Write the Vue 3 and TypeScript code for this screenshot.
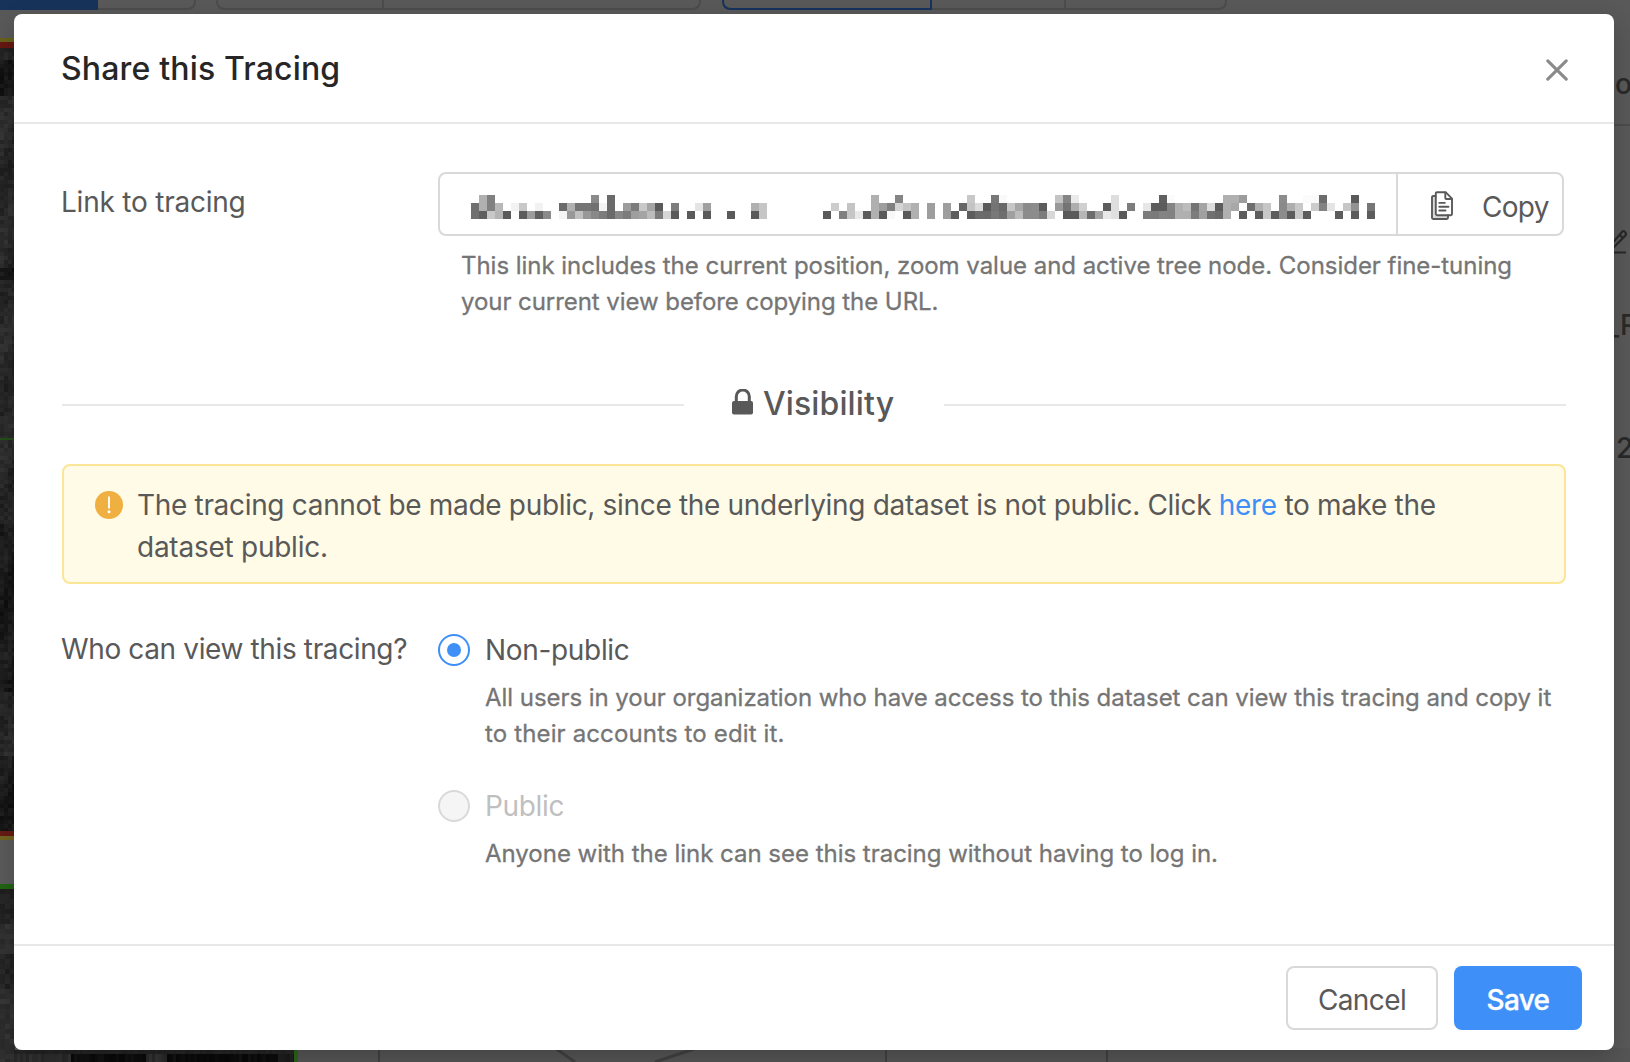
<script setup lang="ts">
import { ref } from 'vue'

interface Cell { x: number; y: number; w: number; h: number; fill: string }

const visibility = ref<'private' | 'public'>('private')

// Redacted link: column index and grey level for every tile, one string per row.
const rows: string[] = [
  '1b0 280 158a 176a 50b0 5385 62c8 6578 66f9 73c4 7484 75ea 80de 8660 87fb 94b0 95b0 969c 1018c 104fb 105fa 1066c 1105a',
  '070 1b0 280 3b8 5f2 6c8 8f2 116a 12b0 1375 1475 1570 16f4 176a 199c 207c 21c8 22a4 235a 257c 28e4 29a0 35b0 36c6 45cc 47c4 50b0 519e 5280 53d4 54c4 55b0 579e 599e 6166 62c4 63dc 645a 6574 6668 67c6 68a6 698a 708c 715c 7398 7474 75ae 76d0 795c 80de 827c 84e6 855c 865c 8784 88b0 89bc 9074 91a4 92dc 935c 94b0 95a8 976e 98b0 99c6 1018a 102ae 103c8 105cc 10682 107e4 109c6 11092 11276',
  '070 160 2c8 3b4 45a 65c 79c 860 98a 11f4 1298 13c0 1498 1588 167c 176a 1888 197c 209e 21a4 22bc 237c 24d6 255a 275a 295a 325a 355a 36c6 445a 4680 47c6 48e8 495a 50b0 515a 52f8 545a 55b0 579e 599e 605c 625c 636c 646a 6578 666e 67a0 68bc 698c 708c 717c 72d8 745a 755a 76b6 776c 78a4 79e8 80e0 815a 847c 857a 8684 8782 88b0 89b0 907c 91a0 9270 936a 94b0 965c 97fb 985c 99c8 1005c 1018c 1025c 103c8 1045c 1085c 1105c 1125c',
]
const tiles: Cell[] = rows.flatMap((row, r) =>
  row.split(' ').map((t) => {
    const g = t.slice(-2)
    return { x: Number(t.slice(0, -2)) * 8, y: r * 8, w: 8, h: 8, fill: `#${g}${g}${g}` }
  }),
)

// Grainy microscopy data at the edges of the viewports.
let seed = 77
const rand = (): number => (seed = (seed * 16807) % 2147483647) / 2147483647
const grey = (v: number): string => {
  const n = Math.round(Math.max(8, Math.min(66, v)))
  return `rgb(${n},${n},${n})`
}
const grain: Cell[] = []
for (let y = 48; y < 831; y += 4) {
  const dark = (y > 58 && y < 96) || (y > 265 && y < 280) || (y > 520 && y < 690) || y > 755 ? -14 : 0
  for (let x = 0; x < 14; x += 4) {
    grain.push({ x, y, w: 4, h: 4, fill: grey(41 + dark + Math.sin(y / 17 + x / 6) * 6 + (rand() - 0.5) * 16) })
  }
}
for (let y = 889; y < 1062; y += 5) {
  const dark = y < 920 || (y > 950 && y < 985) ? -12 : 0
  for (let x = 0; x < 14; x += 5) grain.push({ x, y, w: 5, h: 5, fill: grey(48 + dark + (rand() - 0.5) * 14) })
}
for (let x = 14; x < 294; x += 3) {
  const black = (x > 68 && x < 145) || (x > 165 && x < 277)
  grain.push({ x, y: 1050, w: 3, h: 5, fill: grey(36 + (rand() - 0.5) * 6) })
  grain.push({ x, y: 1054, w: 3, h: 8, fill: grey((black ? 12 : x > 200 ? 30 : 46) + (rand() - 0.5) * 14) })
}
</script>

<template>
  <div class="page">
    <svg class="backdrop" width="1630" height="1062" viewBox="0 0 1630 1062" aria-hidden="true">
      <rect width="1630" height="1062" fill="#595959" />
      <rect width="98" height="10" fill="#18335a" />
      <g fill="none" stroke="#4c4c4c" stroke-width="2">
        <path d="M98 9H187Q195 9 195 1V0M217 0V1Q217 9 225 9H692Q700 9 700 1V0M383 0V8" />
        <path d="M931 9H1218Q1226 9 1226 1V0M1065 0V8" />
        <path d="M1614 125H1630" />
      </g>
      <path d="M723 0V1Q723 9 731 9H931V0" fill="none" stroke="#17335c" stroke-width="2" />
      <rect v-for="(c, i) in grain" :key="i" :x="c.x" :y="c.y" :width="c.w" :height="c.h" :fill="c.fill" />
      <rect y="38" width="14" height="4" fill="#67621c" />
      <rect y="42" width="14" height="6" fill="#651711" />
      <rect y="438" width="14" height="2" fill="#235019" />
      <rect y="831" width="14" height="5" fill="#651b14" />
      <rect y="836" width="14" height="4" fill="#716520" />
      <rect y="840" width="14" height="44" fill="#5b5b5b" />
      <rect y="884" width="14" height="5" fill="#226414" />
      <rect x="294" y="1048" width="4" height="14" fill="#2b6518" />
      <rect x="298" y="1048" width="1332" height="14" fill="#555" />
      <g fill="none" stroke="#414141" stroke-width="2">
        <path d="M379 1048V1062M886 1048V1062M1107 1048V1062" />
        <path d="M555 1048L575 1062M697 1048L655 1062" stroke-width="3" />
      </g>
      <g class="side-text">
        <text x="1615" y="94">o</text>
        <text x="1606" y="335">_R</text>
        <text x="1616" y="458">2</text>
      </g>
      <path d="M1608 252.500H1626" stroke="#292929" stroke-width="2" />
      <path d="M1610 246L1622 232Q1623 230 1625 232Q1627 234 1625 236L1613 248M1619 234L1623 238" fill="none" stroke="#292929" stroke-width="2.200" />
    </svg>

    <section class="modal" role="dialog" aria-labelledby="share-title">
      <header class="head">
        <h1 id="share-title">Share this Tracing</h1>
        <button class="close" type="button" aria-label="Close">
          <svg width="22" height="22" viewBox="0 0 22 22"><path d="M1.800 1.800L20.200 20.200M20.200 1.800L1.800 20.200" stroke="#8a8a8a" stroke-width="3.100" stroke-linecap="round" /></svg>
        </button>
      </header>

      <div class="body">
        <div class="row link-row">
          <div class="label link-label">Link to tracing</div>
          <div class="control">
            <div class="group">
              <div class="link">
                <svg width="904" height="24" viewBox="0 0 904 24" shape-rendering="crispEdges">
                  <rect v-for="(c, i) in tiles" :key="i" :x="c.x" :y="c.y" :width="c.w" :height="c.h" :fill="c.fill" />
                </svg>
              </div>
              <button class="copy" type="button">
                <svg width="22" height="30" viewBox="0 0 22 30" fill="none" stroke="#595959" stroke-width="1.900" stroke-linejoin="round" stroke-linecap="round">
                  <path d="M1.800 6H4V25H16V27.200H1.800Z" fill="#d9d9d9" stroke="none" />
                  <path d="M4.700 5H2.200Q1 5 1 6.200V26.800Q1 28 2.200 28H15.800Q17 28 17 26.800V24.300" />
                  <path d="M6 1.200H14.600L21 7.600V23Q21 24.200 19.800 24.200H6Q4.800 24.200 4.800 23V2.400Q4.800 1.200 6 1.200Z" />
                  <path d="M14.300 1.500V7Q14.300 8 15.300 8H20.700" />
                  <path d="M8.300 11.900H13.800M8.300 15.700H17.500M8.300 19.500H14.500" />
                </svg>
                <span>Copy</span>
              </button>
            </div>
            <p class="hint link-hint"><span class="h1a">This link includes the current position, zoom value and active tree node. Consider fine-tuning</span><br><span class="h1b">your current view before copying the URL.</span></p>
          </div>
        </div>

        <div class="divider">
          <svg width="22" height="26" viewBox="0 0 22 26"><path d="M4.300 13V7.500A6.500 6.500 0 0 1 17.300 7.500V13" fill="none" stroke="#595959" stroke-width="3" /><rect x="0" y="12" width="21" height="13.500" rx="2" fill="#595959" /></svg>
          <span>Visibility</span>
        </div>

        <div class="alert">
          <svg width="28" height="28" viewBox="0 0 28 28"><circle cx="14" cy="14" r="14" fill="#f0b041" /><path d="M14 6.300V16.800" stroke="#fff" stroke-width="1.900" stroke-linecap="round" /><circle cx="14" cy="20.700" r="1.500" fill="#fff" /></svg>
          <p><span class="a1">The tracing cannot be made public, since the underlying dataset is not public. Click <a>here</a> to make the</span><br><span class="a2">dataset public.</span></p>
        </div>

        <div class="row who-row">
          <div class="label who-label">Who can view this tracing?</div>
          <div class="control">
            <div class="option" @click="visibility = 'private'">
              <span class="radio" :class="{ on: visibility === 'private' }" />
              <span class="name">Non-public</span>
            </div>
            <p class="hint opt-hint"><span class="h2a">All users in your organization who have access to this dataset can view this tracing and copy it</span><br><span class="h2b">to their accounts to edit it.</span></p>
            <div class="option disabled second">
              <span class="radio" />
              <span class="name">Public</span>
            </div>
            <p class="hint opt-hint"><span class="h3">Anyone with the link can see this tracing without having to log in.</span></p>
          </div>
        </div>
      </div>

      <footer class="foot">
        <button class="btn cancel" type="button">Cancel</button>
        <button class="btn save" type="button">Save</button>
      </footer>
    </section>
  </div>
</template>

<style>
html, body { overflow: hidden; background: #595959; }
</style>

<style scoped>
* { box-sizing: border-box; }
.page {
  position: relative;
  width: 1630px;
  height: 1062px;
  padding: 14px 16px 12px 14px;
  overflow: hidden;
  font: 400 28px/42px Inter, "Liberation Sans", sans-serif;
  color: #595959;
}
.backdrop { position: absolute; left: 0; top: 0; }
.side-text { font-size: 28px; font-weight: 500; fill: #292929; }
.modal {
  position: relative;
  display: flex;
  flex-direction: column;
  width: 1600px;
  height: 1036px;
  background: #fff;
  border-radius: 8px;
  box-shadow: 0 8px 24px rgba(0, 0, 0, 0.2);
}
h1, p { margin: 0; }
button { font: inherit; color: inherit; padding: 0; margin: 0; background: none; border: 0; }
svg { flex: none; display: block; }
.head {
  display: flex;
  align-items: center;
  justify-content: space-between;
  height: 110px;
  padding: 0 46px 0 47px;
  border-bottom: 2px solid #e8e8e8;
}
h1 { padding-top: 2px; font-size: 32px; line-height: 44px; font-weight: 500; letter-spacing: 0.17px; color: #262626; white-space: nowrap; }
.close { padding-top: 3px; }
.body { flex: 1; padding: 48px 48px 0; white-space: nowrap; }
.row { display: flex; }
.label { width: 377px; margin-left: -1px; flex: none; }
.link-label { padding-top: 9px; letter-spacing: -0.22px; }
.who-label { padding-top: 8px; letter-spacing: -0.37px; }
.control { flex: 1; min-width: 0; }
.group {
  display: flex;
  width: 1126px;
  height: 64px;
  border: 2px solid #d9d9d9;
  border-radius: 8px;
}
.link { width: 956px; padding: 21px 0 0 31px; }
.copy { flex: 1; display: flex; align-items: center; padding-left: 33px; border-left: 2px solid #d9d9d9; }
.copy svg { margin-top: 3px; }
.copy span { margin-left: 29px; margin-top: 5px; letter-spacing: -0.7px; }
.hint { font-size: 24px; line-height: 36px; font-weight: 400; color: #757575; -webkit-text-stroke: 0.3px #757575; }
.h1a { letter-spacing: -0.034px; }
.h1b { letter-spacing: -0.06px; }
.h2a { letter-spacing: -0.05px; }
.h2b { letter-spacing: 0.14px; }
.h3 { letter-spacing: -0.02px; }
.link-hint { padding: 12px 0 0 23px; }
.divider {
  display: flex;
  align-items: center;
  height: 48px;
  margin-top: 61px;
  font-size: 32px;
  font-weight: 500;
}
.divider::before, .divider::after { content: ""; height: 2px; width: 622px; background: #e8e8e8; flex: none; }
.divider svg { margin: -6px 9px 0 48px; }
.divider span { flex: 1; margin-top: -3px; letter-spacing: 0.12px; }
.alert {
  display: flex;
  height: 120px;
  margin-top: 35px;
  padding: 18px 0 0 31px;
  border: 2px solid #fbe596;
  border-radius: 8px;
  background: #fffbe6;
}
.alert svg { margin: 7px 14px 0 0; }
.a1 { letter-spacing: -0.32px; }
.a2 { letter-spacing: -0.25px; }
.alert a { color: #3e8ff7; }
.who-row { margin-top: 36px; }
.control .option { display: flex; align-items: center; height: 60px; }
.radio { width: 32px; height: 32px; border: 2px solid #d9d9d9; border-radius: 50%; display: grid; place-items: center; }
.radio.on { border-color: #3e8ff7; }
.radio.on::after { content: ""; width: 14px; height: 14px; border-radius: 50%; background: #3e8ff7; }
.name { margin-left: 15px; letter-spacing: -0.32px; }
.disabled .radio { background: #f5f5f5; }
.disabled { color: #bfbfbf; }
.opt-hint { padding-left: 47px; }
.second { margin-top: 24px; }
.foot {
  display: flex;
  justify-content: flex-end;
  gap: 16px;
  height: 106px;
  padding: 20px 32px;
  border-top: 2px solid #e8e8e8;
}
.btn { height: 64px; border-radius: 8px; padding-top: 4px; }
.cancel { width: 152px; border: 2px solid #d9d9d9; letter-spacing: -0.6px; }
.save { width: 128px; background: #3e8ff7; color: #fff; font-weight: 500; letter-spacing: -0.7px; -webkit-text-stroke: 0.3px #fff; }
</style>
